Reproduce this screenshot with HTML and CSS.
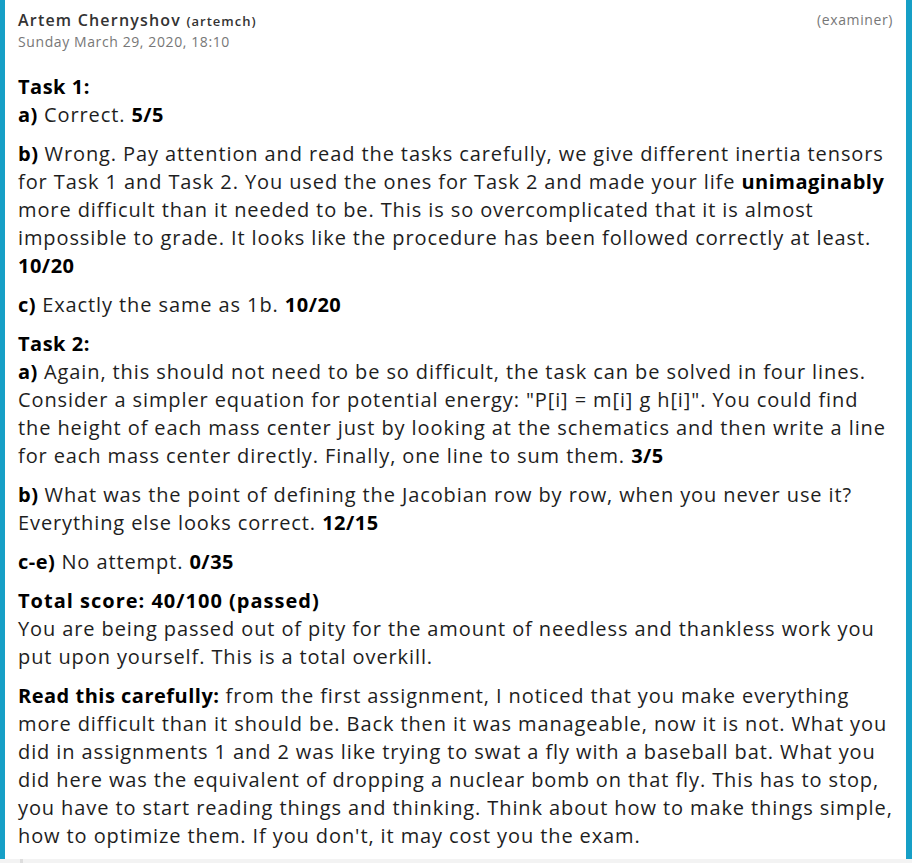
FILE: index.html
```html
<!DOCTYPE html>
<html lang="en">
<head>
<meta charset="utf-8">
<title>Feedback</title>
<link rel="stylesheet" href="styles.css">
</head>
<body>
<article class="card">
  <header class="meta">
    <div class="who">
      <div class="author"><span class="name">Artem Chernyshov</span> <span class="user">(artemch)</span></div>
      <div class="date">Sunday March 29, 2020, 18:10</div>
    </div>
    <div class="role">(examiner)</div>
  </header>
  <div class="content">
    <p><b>Task 1:</b><br><b>a)</b> Correct. <b>5/5</b></p>
    <p><b>b)</b> Wrong. Pay attention and read the tasks carefully, we give different inertia tensors for Task 1 and Task 2. You used the ones for Task 2 and made your life <b>unimaginably</b> more difficult than it needed to be. This is so overcomplicated that it is almost impossible to grade. It looks like the procedure has been followed correctly at least. <b>10/20</b></p>
    <p><b>c)</b> Exactly the same as 1b. <b>10/20</b></p>
    <p><b>Task 2:</b><br><b>a)</b> Again, this should not need to be so difficult, the task can be solved in four lines. Consider a simpler equation for potential energy: "P[i] = m[i] g h[i]". You could find the height of each mass center just by looking at the schematics and then write a line for each mass center directly. Finally, one line to sum them. <b>3/5</b></p>
    <p><b>b)</b> What was the point of defining the Jacobian row by row, when you never use it? Everything else looks correct. <b>12/15</b></p>
    <p><b>c-e)</b> No attempt. <b>0/35</b></p>
    <p><b class="total">Total score: 40/100 (passed)</b><br>You are being passed out of pity for the amount of needless and thankless work you put upon yourself. This is a total overkill.</p>
    <p><b>Read this carefully:</b> from the first assignment, I noticed that you make everything more difficult than it should be. Back then it was manageable, now it is not. What you did in assignments 1 and 2 was like trying to swat a fly with a baseball bat. What you did here was the equivalent of dropping a nuclear bomb on that fly. This has to stop, you have to start reading things and thinking. Think about how to make things simple, how to optimize them. If you don't, it may cost you the exam.</p>
  </div>
</article>
<div class="below"><span class="tick"></span></div>
</body>
</html>
```
FILE: styles.css
```css
html, body {
  margin: 0;
  padding: 0;
  background: #f3f3f3;
}
body {
  font-family: "Open Sans", "Noto Sans", sans-serif;
  color: #1e1e1e;
}
.card {
  background: #fff;
  border-left: 5px solid #169fc6;
  border-right: 6px solid #169fc6;
  padding: 10px 13px 12px 13px;
  box-sizing: border-box;
  height: 859px;
}
.meta {
  display: flex;
  justify-content: space-between;
  align-items: flex-start;
}
.author {
  font-size: 16px;
  line-height: 20px;
  color: #333;
  letter-spacing: 1.2px;
}
.name {
  font-weight: 600;
}
.user {
  font-size: 13px;
  font-weight: 600;
  letter-spacing: 1px;
}
.date {
  font-size: 14px;
  line-height: 22px;
  color: #777;
  letter-spacing: 0.6px;
}
.role {
  font-size: 14px;
  line-height: 20px;
  color: #777;
  letter-spacing: 0.6px;
}
.content {
  margin-top: 20px;
  font-size: 20px;
  line-height: 28px;
  letter-spacing: 0.9px;
}
.content p {
  margin: 0 0 11px 0;
}
.content b {
  font-weight: 700;
  color: #000;
  letter-spacing: 0.5px;
}
.content b.total {
  letter-spacing: 1px;
}
.below {
  height: 4px;
  position: relative;
}
.tick {
  position: absolute;
  left: 20px;
  top: 0;
  width: 3px;
  height: 4px;
  background: #ddd;
}
```
